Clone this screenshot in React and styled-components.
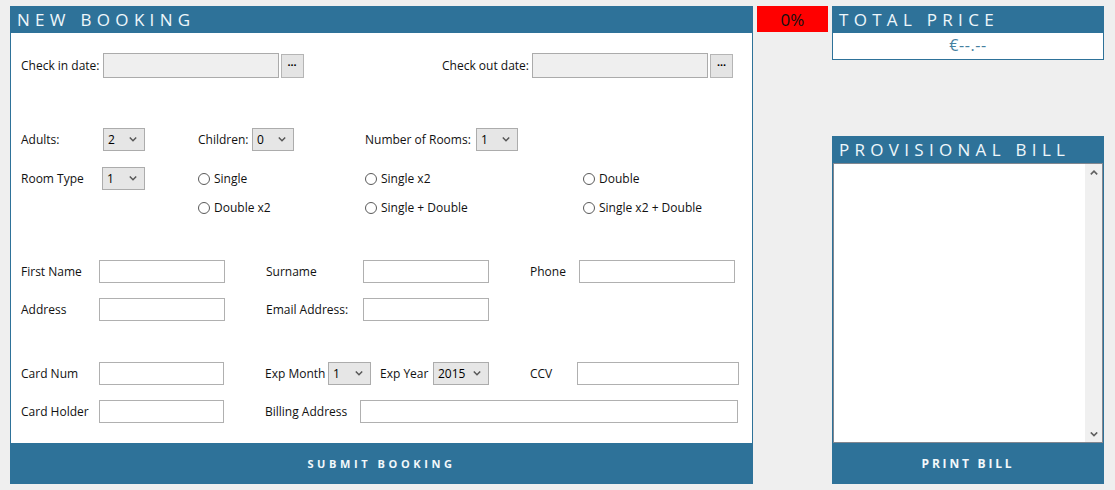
import styled, { createGlobalStyle } from 'styled-components';

const blue = '#2e7299';

const GlobalStyle = createGlobalStyle`
    html, body {
        margin: 0;
        background: #efefef;
        font-family: "Open Sans", "Noto Sans", sans-serif;
    }
`

const Page = styled.div`
    display: flex;
    align-items: flex-start;
    gap: 4px;
    padding: 6px 11px 0 10px;
`

const BookingPanel = styled.div`
    width: 743px;
    display: flex;
    flex-direction: column;
`

const PanelHeader = styled.div`
    height: 27px;
    line-height: 28px;
    background: ${blue};
    color: #eef7fb;
    font-size: 17px;
    letter-spacing: 5.3px;
    padding-left: 7px;
    margin-top: ${({ $gap }) => $gap || 0}px;
    white-space: nowrap;
`

const FormBody = styled.div`
    height: 410px;
    box-sizing: border-box;
    background: #fff;
    border-left: 1px solid ${blue};
    border-right: 1px solid ${blue};
    padding: 20px 19px 0 10px;
    font-size: 12px;
    color: #111;
`

const DateRow = styled.div`
    display: flex;
    justify-content: space-between;
    align-items: center;
    height: 25px;
`

const Field = styled.div`
    display: flex;
    align-items: center;
    height: 23px;
`

const Label = styled.label`
    white-space: nowrap;
    width: ${({ $w }) => ($w ? `${$w}px` : 'auto')};
    margin-left: ${({ $x }) => $x || 0}px;
    flex-shrink: 0;
`

const DateInput = styled.input`
    width: 176px;
    height: 25px;
    box-sizing: border-box;
    margin: 0 2px 0 3px;
    background: #efefef;
    border: 1px solid #ababab;
`

const PickButton = styled.button`
    width: 23px;
    height: 24px;
    padding: 0 0 6px;
    background: #e4e4e4;
    border: 1px solid #b5b5b5;
    font-weight: bold;
    font-size: 11px;
    line-height: 1;
    color: #000;
`

const ChoiceGrid = styled.div`
    margin-top: 50px;
    display: grid;
    grid-template-columns: 82px 95px 167px 218px 1fr;
    grid-template-rows: 23px 39px 29px;
    align-items: end;
`

const TextGrid = styled.div`
    margin-top: 41px;
    display: grid;
    grid-template-columns: ${({ $cols }) => $cols};
    grid-auto-rows: 23px;
    row-gap: 15px;
    align-items: center;
`

const SelectWrap = styled.div`
    position: relative;
    width: ${({ $w }) => $w}px;
    height: 23px;
    margin-left: ${({ $x }) => $x || 0}px;
    flex-shrink: 0;
`

const Select = styled.select`
    appearance: none;
    width: 100%;
    height: 100%;
    box-sizing: border-box;
    background: #e6e6e6;
    border: 1px solid #acacac;
    border-radius: 0;
    padding: 0 0 0 4px;
    font-family: inherit;
    font-size: 12px;
    color: #000;
`

const Chevron = styled.svg`
    position: absolute;
    right: 8px;
    top: 9px;
    pointer-events: none;
`

const Radio = styled.label`
    display: flex;
    align-items: center;
    gap: 4px;
    height: 23px;
    white-space: nowrap;
    grid-column: ${({ $col }) => $col};

    input {
        appearance: none;
        margin: 0;
        width: 12px;
        height: 12px;
        border: 1px solid #5a5a5a;
        border-radius: 50%;
        background: #fff;
    }
`

const TextInput = styled.input`
    width: ${({ $w }) => $w}px;
    height: 23px;
    box-sizing: border-box;
    border: 1px solid #b0b0b0;
    background: #fff;
    margin: 0;
`

const ActionButton = styled.button`
    height: 41px;
    width: 100%;
    border: none;
    background: ${blue};
    color: #f2f8fb;
    font-family: inherit;
    font-weight: bold;
    font-size: ${({ $size }) => $size || 11}px;
    letter-spacing: ${({ $spacing }) => $spacing || 3}px;
    padding: 0;
`

const Discount = styled.div`
    width: 71px;
    height: 26px;
    flex-shrink: 0;
    background: #ff0000;
    color: #111;
    text-align: center;
    font-size: 17px;
    line-height: 27px;
`

const SideColumn = styled.div`
    width: 272px;
    display: flex;
    flex-direction: column;
`

const PriceBox = styled.div`
    height: 27px;
    box-sizing: border-box;
    background: #fff;
    border: 1px solid ${blue};
    border-top: none;
    text-align: center;
    color: #46809f;
    font-size: 16px;
    line-height: 25px;
    letter-spacing: 0.6px;
`

const BillBox = styled.div`
    height: 280px;
    box-sizing: border-box;
    border-left: 1px solid ${blue};
    border-right: 1px solid ${blue};
    display: flex;
`

const BillText = styled.div`
    flex: 1;
    display: flex;
    background: #fff;
    border: 1px solid #828790;
`

const BillArea = styled.div`
    flex: 1;
`

const ScrollTrack = styled.div`
    width: 17px;
    background: #f0f0f0;
    display: flex;
    flex-direction: column;
    justify-content: space-between;
    align-items: center;
    padding: 6px 0 5px;
`

const Arrow = ({ up, size = 8 }) => (
    <svg width={size} height={size * 0.6} viewBox="0 0 10 6">
        <path
            d={up ? 'M1 5.5 L5 1.5 L9 5.5' : 'M1 0.5 L5 4.5 L9 0.5'}
            fill="none"
            stroke="#606060"
            strokeWidth="2"
        />
    </svg>
);

const Dropdown = ({ w, x, value, options }) => (
    <SelectWrap $w={w} $x={x}>
        <Select defaultValue={value}>
            {options.map(o => <option key={o}>{o}</option>)}
        </Select>
        <Chevron width="8" height="5" viewBox="0 0 10 6">
            <path d="M1 0.5 L5 4.5 L9 0.5" fill="none" stroke="#555" strokeWidth="1.8" />
        </Chevron>
    </SelectWrap>
);

const App = () => {
    const counts = ['0', '1', '2', '3', '4'];
    return <>
        <GlobalStyle />
        <Page>
            <BookingPanel>
                <PanelHeader>NEW BOOKING</PanelHeader>
                <FormBody>
                    <DateRow>
                        <Field>
                            <Label>Check in date:</Label>
                            <DateInput readOnly />
                            <PickButton>...</PickButton>
                        </Field>
                        <Field>
                            <Label>Check out date:</Label>
                            <DateInput readOnly />
                            <PickButton>...</PickButton>
                        </Field>
                    </DateRow>

                    <ChoiceGrid>
                        <Field><Label>Adults:</Label></Field>
                        <Field><Dropdown w={42} value="2" options={counts} /></Field>
                        <Field>
                            <Label $w={54}>Children:</Label>
                            <Dropdown w={42} value="0" options={counts} />
                        </Field>
                        <Field>
                            <Label $w={111}>Number of Rooms:</Label>
                            <Dropdown w={42} value="1" options={['1', '2', '3']} />
                        </Field>
                        <div />

                        <Field><Label>Room Type</Label></Field>
                        <Field><Dropdown w={43} x={-1} value="1" options={['1', '2', '3']} /></Field>
                        <Radio $col={3}><input type="radio" name="room" />Single</Radio>
                        <Radio $col={4}><input type="radio" name="room" />Single x2</Radio>
                        <Radio $col={5}><input type="radio" name="room" />Double</Radio>

                        <Radio $col={3}><input type="radio" name="room" />Double x2</Radio>
                        <Radio $col={4}><input type="radio" name="room" />Single + Double</Radio>
                        <Radio $col={5}><input type="radio" name="room" />Single x2 + Double</Radio>
                    </ChoiceGrid>

                    <TextGrid $cols="78px 167px 97px 167px 49px 156px">
                        <Label>First Name</Label>
                        <TextInput $w={126} />
                        <Label>Surname</Label>
                        <TextInput $w={126} />
                        <Label>Phone</Label>
                        <TextInput $w={156} />

                        <Label>Address</Label>
                        <TextInput $w={126} />
                        <Label>Email Address:</Label>
                        <TextInput $w={126} />
                    </TextGrid>

                    <TextGrid $cols="78px 166px 265px 47px 162px">
                        <Label>Card Num</Label>
                        <TextInput $w={125} />
                        <Field>
                            <Label $w={63}>Exp Month</Label>
                            <Dropdown w={43} value="1" options={['1', '2', '3', '4', '5', '6', '7', '8', '9', '10', '11', '12']} />
                            <Label $w={53} $x={9}>Exp Year</Label>
                            <Dropdown w={56} value="2015" options={['2015', '2016', '2017', '2018']} />
                        </Field>
                        <Label>CCV</Label>
                        <TextInput $w={162} />

                        <Label>Card Holder</Label>
                        <TextInput $w={125} />
                        <Field style={{ gridColumn: '3 / 6' }}>
                            <Label $w={95}>Billing Address</Label>
                            <TextInput $w={378} />
                        </Field>
                    </TextGrid>
                </FormBody>
                <ActionButton $spacing={3.6}>SUBMIT BOOKING</ActionButton>
            </BookingPanel>

            <Discount>0%</Discount>

            <SideColumn>
                <PanelHeader>TOTAL PRICE</PanelHeader>
                <PriceBox>€--.--</PriceBox>
                <PanelHeader $gap={76}>PROVISIONAL BILL</PanelHeader>
                <BillBox>
                    <BillText>
                        <BillArea />
                        <ScrollTrack>
                            <Arrow up />
                            <Arrow />
                        </ScrollTrack>
                    </BillText>
                </BillBox>
                <ActionButton $size={12} $spacing={2.8}>PRINT BILL</ActionButton>
            </SideColumn>
        </Page>
    </>
}

export default App;
